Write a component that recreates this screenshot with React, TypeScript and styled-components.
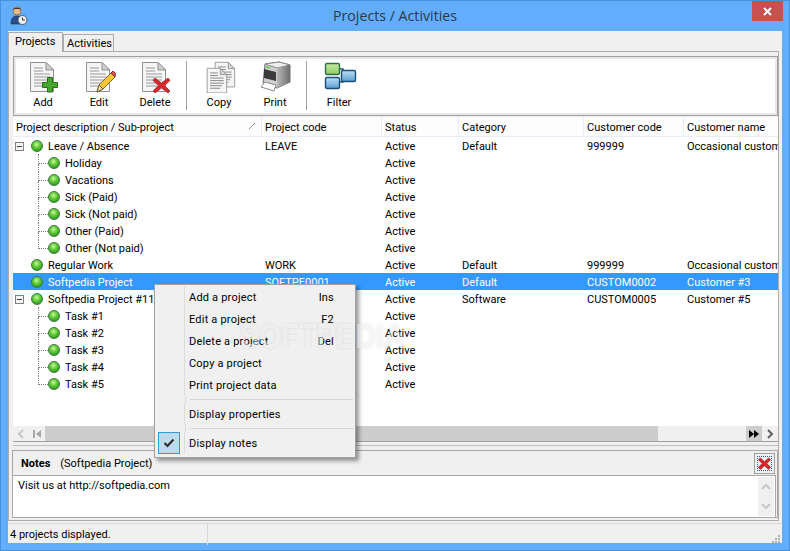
import React from "react";
import styled, { createGlobalStyle } from "styled-components";

const GlobalStyle = createGlobalStyle`
  html, body { margin: 0; padding: 0; background: #62aefc; }
  * { box-sizing: border-box; }
`;

const FONT = `Roboto, "Liberation Sans", sans-serif`;

const Window = styled.div`
  position: relative;
  width: 790px;
  height: 551px;
  display: flex;
  flex-direction: column;
  background: #62aefc;
  border: 1px solid #4a90d6;
  font-family: ${FONT};
  font-size: 11px;
  color: #000;
  overflow: hidden;
`;

const TitleBar = styled.div`
  height: 30px;
  flex: none;
  display: grid;
  grid-template-columns: 1fr auto 1fr;
  align-items: start;
`;

const AppIcon = styled.svg`
  margin: 5px 0 0 9px;
`;

const Title = styled.div`
  font-family: "Open Sans", sans-serif;
  font-size: 14.2px;
  line-height: 30px;
  color: #2b3a4a;
`;

const CloseBox = styled.div`
  justify-self: end;
  width: 31px;
  height: 20px;
  margin-right: 6px;
  background: #c75050;
  display: flex;
  align-items: center;
  justify-content: center;
`;

const Client = styled.div`
  flex: 1;
  margin: 0 7px 7px 7px;
  background: #f0f0f0;
  display: flex;
  flex-direction: column;
  min-height: 0;
`;

const TabStrip = styled.div`
  height: 21px;
  flex: none;
  display: flex;
  align-items: flex-end;
  margin-bottom: -1px;
`;

const Tab = styled.div<{ $active?: boolean }>`
  position: relative;
  height: ${({ $active }) => ($active ? "20px" : "18px")};
  width: ${({ $active }) => ($active ? "55px" : "51px")};
  padding-left: ${({ $active }) => ($active ? "6px" : "3px")};
  line-height: 17px;
  background: #f0f0f0;
  border: 1px solid #acacac;
  border-bottom: ${({ $active }) => ($active ? "none" : "1px solid #acacac")};
  z-index: ${({ $active }) => ($active ? 1 : 0)};
`;

const Panel = styled.div`
  height: 471px;
  margin-right: 3px;
  border: 1px solid #acacac;
  padding: 4px 0 2px 4px;
  display: flex;
  flex-direction: column;
`;

const Toolbar = styled.div`
  height: 60px;
  flex: none;
  display: flex;
  align-items: stretch;
  background: #fff;
  border: 1px solid #a0a0a0;
  box-shadow: inset 0 0 0 2px #e8e8e8;
  padding: 4px 0 0 1px;
`;

const ToolButton = styled.div`
  width: 56px;
  display: flex;
  flex-direction: column;
  align-items: center;
  line-height: 14px;
  gap: 3px;
`;

const ToolIcon = styled.div`
  width: 32px;
  height: 32px;
  margin-left: 2px;
`;

const ToolSep = styled.div`
  width: 1px;
  margin: 0 4px 0 3px;
  height: 49px;
  background: #a0a0a0;
`;

const Table = styled.div`
  margin-top: 1px;
  height: 309px;
  flex: none;
  background: #fff;
  overflow: hidden;
`;

const COLS = "249px 120px 77px 125px 100px 95px";

const HeaderRow = styled.div`
  display: grid;
  grid-template-columns: ${COLS};
  height: 20px;
  background: #fdfdfd;
  border-bottom: 1px solid #e6eefa;
`;

const HeaderCell = styled.div`
  position: relative;
  padding-left: 3px;
  line-height: 21px;
  border-right: 1px solid #e6eefa;
  white-space: nowrap;
  overflow: hidden;
`;

const SortMark = styled.svg`
  position: absolute;
  right: 5px;
  top: 5px;
`;

const Row = styled.div<{ $selected?: boolean }>`
  display: grid;
  grid-template-columns: ${COLS};
  height: 17px;
  line-height: 19px;
  background: ${({ $selected }) => ($selected ? "#3399ff" : "transparent")};
  color: ${({ $selected }) => ($selected ? "#fff" : "#000")};
`;

const Cell = styled.div`
  padding-left: 3px;
  white-space: nowrap;
  overflow: hidden;
`;

const TreeCell = styled.div`
  display: flex;
  align-items: center;
  white-space: nowrap;
  overflow: hidden;
`;

const TreeName = styled.span`
  height: 17px;
`;

const ExpanderSlot = styled.div`
  width: 18px;
  flex: none;
  padding-left: 2px;
  display: flex;
  align-items: center;
`;

const Expander = styled.div`
  width: 9px;
  height: 9px;
  margin-top: 1px;
  border: 1px solid #808080;
  background: #f4f4f4;
  display: flex;
  align-items: center;
  justify-content: center;
  &::before {
    content: "";
    width: 5px;
    height: 1px;
    background: #404040;
  }
`;

const Guide = styled.div<{ $last?: boolean }>`
  width: 10px;
  height: 17px;
  margin-left: 25px;
  flex: none;
  &::before {
    content: "";
    display: block;
    height: 9px;
    border-left: 1px dotted #808080;
    border-bottom: 1px dotted #808080;
  }
  &::after {
    content: "";
    display: block;
    height: 8px;
    border-left: ${({ $last }) => ($last ? "none" : "1px dotted #808080")};
  }
`;

const Ball = styled.div`
  width: 12px;
  height: 12px;
  flex: none;
  margin: 1px 5px 0 0;
  border-radius: 50%;
  border: 1px solid #3c7a3c;
  background: radial-gradient(circle at 45% 35%, #c9f5a6 0%, #6fd13f 35%, #2ea01f 75%, #1d7d1a 100%);
`;

const HScroll = styled.div`
  height: 16px;
  flex: none;
  display: flex;
  align-items: stretch;
  background: #f0f0f0;
  border-bottom: 1px solid #a0a0a0;
`;

const ScrollBtn = styled.div<{ $dark?: boolean }>`
  width: 16px;
  flex: none;
  display: flex;
  align-items: center;
  justify-content: center;
  background: ${({ $dark }) => ($dark ? "#cdcdcd" : "transparent")};
`;

const Thumb = styled.div`
  width: 613px;
  flex: none;
  background: #cdcdcd;
`;

const ScrollGap = styled.div`
  flex: 1;
`;

const Splitter = styled.div`
  height: 5px;
  flex: none;
  margin-top: 3px;
  border-top: 1px solid #c0c0c0;
`;

const Notes = styled.div`
  height: 68px;
  flex: none;
  margin-left: -1px;
  border: 1px solid #a8a8a8;
  display: flex;
  flex-direction: column;
`;

const NotesHead = styled.div`
  height: 24px;
  flex: none;
  display: flex;
  align-items: center;
  padding: 0 2px 0 8px;
  gap: 10px;
`;

const NotesTitle = styled.span`
  font-weight: 700;
`;

const NotesClose = styled.div`
  margin-left: auto;
  width: 21px;
  height: 21px;
  padding: 2px;
  border: 1px solid #a0a0a0;
`;

const NotesCloseInner = styled.div`
  width: 100%;
  height: 100%;
  border: 1px dotted #1c5fa8;
  display: flex;
  align-items: center;
  justify-content: center;
`;

const NotesBody = styled.div`
  flex: 1;
  display: flex;
  margin-right: 1px;
  background: #fff;
  border-top: 1px solid #a8a8a8;
  border-right: 1px solid #a8a8a8;
  padding: 1px 1px 1px 5px;
  line-height: 17px;
`;

const NotesText = styled.div`
  flex: 1;
`;

const NotesScroll = styled.div`
  width: 16px;
  display: flex;
  flex-direction: column;
  justify-content: space-between;
  align-items: center;
  background: #f0f0f0;
  padding: 5px 0;
`;

const StatusBar = styled.div`
  flex: 1;
  display: flex;
  align-items: center;
  margin-top: 2px;
  border-top: 1px solid #d8d8d8;
`;

const StatusText = styled.div`
  width: 200px;
  height: 100%;
  padding-left: 2px;
  line-height: 21px;
  border-right: 1px solid #d8d8d8;
`;

const Grip = styled.svg`
  margin-left: auto;
  align-self: flex-end;
  margin-right: 1px;
  margin-bottom: 1px;
`;

const Menu = styled.div`
  position: absolute;
  left: 153px;
  top: 283px;
  width: 202px;
  height: 174px;
  padding: 1px 2px 2px;
  background: #f0f0f0;
  border: 1px solid #a0a0a0;
  box-shadow: 3px 3px 4px rgba(0, 0, 0, 0.4);
  letter-spacing: 0.2px;
  display: flex;
  flex-direction: column;
  z-index: 5;
`;

const MenuItem = styled.div`
  height: 22px;
  flex: none;
  display: flex;
  align-items: center;
`;

const MenuGutter = styled.div`
  width: 28px;
  height: 100%;
  flex: none;
  margin-right: 4px;
  padding-left: 1px;
  border-right: 1px solid #dcdcdc;
  display: flex;
  align-items: center;
`;

const MenuLabel = styled.div`
  flex: 1;
`;

const MenuKey = styled.div`
  margin-right: 19px;
`;

const MenuSep = styled.div`
  height: 7px;
  flex: none;
  display: flex;
  align-items: center;
  &::before {
    content: "";
    width: 28px;
    height: 100%;
    margin-right: 4px;
    border-right: 1px solid #dcdcdc;
    flex: none;
  }
  &::after {
    content: "";
    flex: 1;
    height: 1px;
    background: #d4d4d4;
  }
`;

const CheckBox = styled.div`
  width: 22px;
  height: 22px;
  background: #bcdcec;
  border: 1px solid #3399dd;
  display: flex;
  align-items: center;
  justify-content: center;
`;

const Watermark = styled.div`
  position: absolute;
  left: 239px;
  top: 318px;
  font-family: "Liberation Sans", sans-serif;
  font-weight: 700;
  font-size: 28.5px;
  line-height: 34px;
  letter-spacing: 0.2px;
  transform: scaleY(1.2);
  color: rgba(255, 255, 255, 0.5);
  text-shadow: 0 0 3px rgba(0, 0, 0, 0.1);
  z-index: 6;
  pointer-events: none;
`;

/* toolbar drawings */
const DocBase: React.FC<{ line?: string }> = ({ line = "#9a9a9a" }) => (
  <g>
    <path d="M2.5 1.5H18L25.5 9V30.5H2.5Z" fill="#f5f5f5" stroke="#8f8f8f" />
    <path d="M18 1.5V9H25.5Z" fill="#d4d4d4" stroke="#8f8f8f" />
    <path
      d="M6 7H15M6 10H15M6 13H22M6 16H22M6 19H22M6 22H20M6 25H18"
      stroke={line}
      strokeWidth="1"
    />
  </g>
);

const AddIcon = () => (
  <svg width="32" height="32" viewBox="0 0 32 32">
    <DocBase />
    <path
      d="M18.5 17.5H23.5V22.5H28.5V27.5H23.5V32H18.5V27.5H13.5V22.5H18.5Z"
      transform="translate(1 -1)"
      fill="#46a62e"
      stroke="#2a6e1c"
    />
  </svg>
);

const EditIcon = () => (
  <svg width="32" height="32" viewBox="0 0 32 32">
    <DocBase />
    <path d="M13 31L15 24L27 12L31 16L19 28Z" fill="#f3c73a" stroke="#8a6a14" />
    <path d="M27 12L29 10L31.5 12.5L31 16Z" fill="#d9534f" stroke="#8a3030" />
    <path d="M13 31L15 24L19 28Z" fill="#f5e0b0" stroke="#6b5a30" />
  </svg>
);

const DeleteIcon = () => (
  <svg width="32" height="32" viewBox="0 0 32 32">
    <DocBase />
    <path
      d="M15 17L21.5 22L28 17L30 19.5L24.5 24.5L30 30L28 32L21.5 27L15 32L13 30L18.5 24.5L13 19.5Z"
      fill="#d8262c"
      stroke="#a01c20"
      strokeWidth="0.7"
    />
  </svg>
);

const CopyIcon = () => (
  <svg width="32" height="32" viewBox="0 0 32 32">
    <g transform="translate(9 0) scale(0.85)">
      <DocBase line="#777" />
    </g>
    <g transform="translate(1 6) scale(0.85)">
      <DocBase line="#777" />
    </g>
  </svg>
);

const PrintIcon = () => (
  <svg width="32" height="32" viewBox="0 0 32 32">
    <defs>
      <linearGradient id="ps" x1="0" y1="0" x2="1" y2="0">
        <stop offset="0" stopColor="#b8b8b8" />
        <stop offset="1" stopColor="#6e6e6e" />
      </linearGradient>
    </defs>
    <path d="M5 3L19 1L30 4V21L17 27L3 22Z" fill="#cfcfcf" stroke="#6f6f6f" />
    <path d="M5 3L19 1L30 4L17 7Z" fill="#eeeeee" stroke="#8a8a8a" />
    <path d="M17 7V27L30 21V4Z" fill="url(#ps)" />
    <path d="M4 8L16 11V20L4 17Z" fill="#3c3c3c" />
    <path d="M6 5.2L11 6.2L9 7.4L5.5 6.4Z" fill="#5fce4a" />
    <path d="M5 21L16 24L14 30L1 26Z" fill="#fbfbfb" stroke="#8a8a8a" />
  </svg>
);

const FilterIcon = () => (
  <svg width="34" height="32" viewBox="0 0 34 32">
    <defs>
      <linearGradient id="fg" x1="0" y1="0" x2="0" y2="1">
        <stop offset="0" stopColor="#c6eaa0" />
        <stop offset="1" stopColor="#8dcf62" />
      </linearGradient>
      <linearGradient id="fb" x1="0" y1="0" x2="0" y2="1">
        <stop offset="0" stopColor="#bfe0f4" />
        <stop offset="1" stopColor="#5a9fd4" />
      </linearGradient>
    </defs>
    <path d="M15 8H19V13M15 21H19V17" stroke="#1d5a78" strokeWidth="1.4" fill="none" />
    <rect x="1.5" y="2.5" width="14" height="11" rx="1.5" fill="url(#fg)" stroke="#2c6e4a" strokeWidth="1.4" />
    <rect x="1.5" y="16.5" width="14" height="11" rx="1.5" fill="url(#fb)" stroke="#174f78" strokeWidth="1.4" />
    <rect x="17.5" y="9.5" width="14" height="11" rx="1.5" fill="url(#fb)" stroke="#174f78" strokeWidth="1.4" />
  </svg>
);

const RedX: React.FC<{ size?: number }> = ({ size = 14 }) => (
  <svg width={size} height={size} viewBox="0 0 14 14">
    <path
      d="M2.5 1L7 5L11.5 1L13.5 3L9.5 7L13.5 11L11.5 13.5L7 9.5L2.5 13.5L0.5 11L4.5 7L0.5 3Z"
      fill="#d8262c"
      stroke="#8a1a1e"
      strokeWidth="0.7"
    />
  </svg>
);

const Glyph: React.FC<{ d: string; color: string; fill?: boolean }> = ({ d, color, fill }) => (
  <svg width="10" height="10" viewBox="0 0 10 10">
    <path
      d={d}
      fill={fill ? color : "none"}
      stroke={fill ? "none" : color}
      strokeWidth={fill ? 0 : 2}
    />
  </svg>
);

interface ProjectRow {
  name: string;
  code?: string;
  category?: string;
  customerCode?: string;
  customer?: string;
  expander?: boolean;
  child?: boolean;
  last?: boolean;
  selected?: boolean;
}

const ROWS: ProjectRow[] = [
  { name: "Leave / Absence", code: "LEAVE", category: "Default", customerCode: "999999", customer: "Occasional customer", expander: true },
  { name: "Holiday", child: true },
  { name: "Vacations", child: true },
  { name: "Sick (Paid)", child: true },
  { name: "Sick (Not paid)", child: true },
  { name: "Other (Paid)", child: true },
  { name: "Other (Not paid)", child: true, last: true },
  { name: "Regular Work", code: "WORK", category: "Default", customerCode: "999999", customer: "Occasional customer" },
  { name: "Softpedia Project", code: "SOFTPE0001", category: "Default", customerCode: "CUSTOM0002", customer: "Customer #3", selected: true },
  { name: "Softpedia Project #11", code: "SOFTPE0011", category: "Software", customerCode: "CUSTOM0005", customer: "Customer #5", expander: true },
  { name: "Task #1", child: true },
  { name: "Task #2", child: true },
  { name: "Task #3", child: true },
  { name: "Task #4", child: true },
  { name: "Task #5", child: true, last: true },
];

const App: React.FC = () => (
  <Window>
    <GlobalStyle />
    <TitleBar>
      <AppIcon width="18" height="20" viewBox="0 0 18 20">
        <circle cx="7" cy="5" r="4" fill="#e8b98a" stroke="#6b4a2a" strokeWidth="0.6" />
        <path d="M3 4C3 1 11 1 11 4L9 3H5Z" fill="#4a3018" />
        <path d="M1 18C1 11 4 10 7 10C10 10 13 11 13 18Z" fill="#2a4f8a" stroke="#16305a" strokeWidth="0.6" />
        <circle cx="12.5" cy="14" r="4.5" fill="#eef2f6" stroke="#4a5a6a" />
        <path d="M12.5 11.5V14H15" stroke="#333" fill="none" />
      </AppIcon>
      <Title>Projects / Activities</Title>
      <CloseBox>
        <svg width="9" height="9" viewBox="0 0 9 9">
          <path d="M1 1L8 8M8 1L1 8" stroke="#fff" strokeWidth="2" />
        </svg>
      </CloseBox>
    </TitleBar>
    <Client>
      <TabStrip>
        <Tab $active>Projects</Tab>
        <Tab>Activities</Tab>
      </TabStrip>
      <Panel>
        <Toolbar>
          <ToolButton><ToolIcon><AddIcon /></ToolIcon>Add</ToolButton>
          <ToolButton><ToolIcon><EditIcon /></ToolIcon>Edit</ToolButton>
          <ToolButton><ToolIcon><DeleteIcon /></ToolIcon>Delete</ToolButton>
          <ToolSep />
          <ToolButton><ToolIcon><CopyIcon /></ToolIcon>Copy</ToolButton>
          <ToolButton><ToolIcon><PrintIcon /></ToolIcon>Print</ToolButton>
          <ToolSep />
          <ToolButton><ToolIcon><FilterIcon /></ToolIcon>Filter</ToolButton>
        </Toolbar>
        <Table>
          <HeaderRow>
            <HeaderCell>
              Project description / Sub-project
              <SortMark width="8" height="8" viewBox="0 0 8 8">
                <path d="M1 7L7 1" stroke="#909090" />
              </SortMark>
            </HeaderCell>
            <HeaderCell>Project code</HeaderCell>
            <HeaderCell>Status</HeaderCell>
            <HeaderCell>Category</HeaderCell>
            <HeaderCell>Customer code</HeaderCell>
            <HeaderCell>Customer name</HeaderCell>
          </HeaderRow>
          {ROWS.map((row) => (
            <Row key={row.name} $selected={row.selected}>
              <TreeCell>
                {row.child ? (
                  <Guide $last={row.last} />
                ) : (
                  <ExpanderSlot>{row.expander && <Expander />}</ExpanderSlot>
                )}
                <Ball />
                <TreeName>{row.name}</TreeName>
              </TreeCell>
              <Cell>{row.code}</Cell>
              <Cell>Active</Cell>
              <Cell>{row.category}</Cell>
              <Cell>{row.customerCode}</Cell>
              <Cell>{row.customer}</Cell>
            </Row>
          ))}
        </Table>
        <HScroll>
          <ScrollBtn><Glyph d="M7 1L3 5L7 9" color="#c8c8c8" /></ScrollBtn>
          <ScrollBtn><Glyph d="M1 1H3V9H1ZM9 1V9L4 5Z" color="#a8a8a8" fill /></ScrollBtn>
          <Thumb />
          <ScrollGap />
          <ScrollBtn $dark><Glyph d="M0 1L5 5L0 9ZM5 1L10 5L5 9Z" color="#000" fill /></ScrollBtn>
          <ScrollBtn><Glyph d="M3 1L7 5L3 9" color="#606060" /></ScrollBtn>
        </HScroll>
        <Splitter />
        <Notes>
          <NotesHead>
            <NotesTitle>Notes</NotesTitle>
            <span>(Softpedia Project)</span>
            <NotesClose>
              <NotesCloseInner>
                <RedX size={13} />
              </NotesCloseInner>
            </NotesClose>
          </NotesHead>
          <NotesBody>
            <NotesText>Visit us at http://softpedia.com</NotesText>
            <NotesScroll>
              <Glyph d="M1 7L5 3L9 7" color="#c8c8c8" />
              <Glyph d="M1 3L5 7L9 3" color="#c8c8c8" />
            </NotesScroll>
          </NotesBody>
        </Notes>
      </Panel>
      <StatusBar>
        <StatusText>4 projects displayed.</StatusText>
        <Grip width="10" height="10" viewBox="0 0 10 10">
          <path d="M7 1H9V3H7ZM4 4H6V6H4ZM7 4H9V6H7ZM1 7H3V9H1ZM4 7H6V9H4ZM7 7H9V9H7Z" fill="#b0b0b0" />
        </Grip>
      </StatusBar>
    </Client>
    <Menu>
      <MenuItem><MenuGutter /><MenuLabel>Add a project</MenuLabel><MenuKey>Ins</MenuKey></MenuItem>
      <MenuItem><MenuGutter /><MenuLabel>Edit a project</MenuLabel><MenuKey>F2</MenuKey></MenuItem>
      <MenuItem><MenuGutter /><MenuLabel>Delete a project</MenuLabel><MenuKey>Del</MenuKey></MenuItem>
      <MenuItem><MenuGutter /><MenuLabel>Copy a project</MenuLabel></MenuItem>
      <MenuItem><MenuGutter /><MenuLabel>Print project data</MenuLabel></MenuItem>
      <MenuSep />
      <MenuItem><MenuGutter /><MenuLabel>Display properties</MenuLabel></MenuItem>
      <MenuSep />
      <MenuItem>
        <MenuGutter>
          <CheckBox>
            <svg width="12" height="10" viewBox="0 0 12 10">
              <path d="M1.5 5L4.5 8L10.5 1.5" stroke="#303030" strokeWidth="2.2" fill="none" />
            </svg>
          </CheckBox>
        </MenuGutter>
        <MenuLabel>Display notes</MenuLabel>
      </MenuItem>
    </Menu>
    <Watermark>SOFTPEDIA</Watermark>
  </Window>
);

export default App;
